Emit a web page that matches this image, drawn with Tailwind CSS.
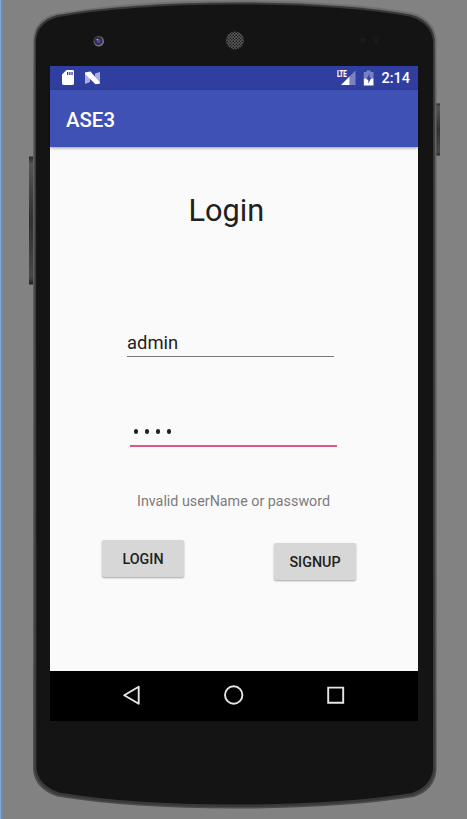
<!DOCTYPE html>
<html lang="en">
<head>
<meta charset="utf-8">
<title>ASE3</title>
<script src="https://cdn.jsdelivr.net/npm/@tailwindcss/browser@4"></script>
</head>
<body class="h-[819px] w-[467px] overflow-hidden bg-[#828282] font-['Roboto',sans-serif]">
<div class="relative h-[819px] w-[467px] border-l-3 border-[#7289a4] pl-[47px] pt-[66px]">
  <!-- device frame -->
  <svg class="absolute -left-[3px] top-0" width="467" height="819" viewBox="0 0 467 819" fill="none">
    <defs>
      <linearGradient id="key" x1="0" y1="0" x2="0" y2="1"><stop stop-color="#292929"/><stop offset=".06" stop-color="#555"/><stop offset=".5" stop-color="#303030"/><stop offset=".94" stop-color="#484848"/><stop offset="1" stop-color="#222"/></linearGradient>
      <linearGradient id="edge" x1="0" y1="0" x2="0" y2="1"><stop stop-color="#707371"/><stop offset=".12" stop-color="#626262"/><stop offset=".8" stop-color="#555"/><stop offset="1" stop-color="#4b4b4b"/></linearGradient>
      <pattern id="mesh" width="3" height="3" patternUnits="userSpaceOnUse"><rect width="3" height="3" fill="#5a5a5a"/><circle cx=".8" cy=".8" r=".8" fill="#1c1c1c"/><circle cx="2.300" cy="2.300" r=".8" fill="#1c1c1c"/></pattern>
    </defs>
    <path d="M.5 0v819" stroke="#86a9d3"/>
    <rect x="29" y="156.500" width="5" height="128" fill="url(#key)"/>
    <rect x="435" y="103.500" width="5" height="52" fill="url(#key)"/>
    <path d="M33 40Q34 19 56 13.500Q130 .5 235 .5Q340 .5 412 12.500Q435 19 436.500 40V770Q435 790 414 797Q340 808.500 235 808.500Q130 808.500 57 796.500Q35 789 33 770Z" fill="url(#edge)"/>
    <path d="M34.500 40Q35.500 21 57 15Q130 2.500 235 2.500Q340 2.500 411 14.500Q433 21 434.800 40V770Q433 788 413 795.500Q340 807 235 807Q130 807 58 795Q36.500 787 34.500 770Z" fill="#393939"/>
    <path d="M36 41Q37 23 58 17Q130 4.500 235 4.500Q340 4.500 410 16.500Q431 23 433 41V769Q431 786 412 793Q340 804.500 235 804.500Q130 804.500 59 792.500Q38.500 785 36.500 769Z" fill="#141414"/>
    <circle cx="98.800" cy="41.200" r="5.200" fill="#777183"/>
    <circle cx="98.300" cy="40.800" r="4.200" fill="#302b48"/>
    <circle cx="98.500" cy="41" r="2.100" fill="#4e499a"/>
    <circle cx="97.300" cy="39.500" r=".8" fill="#b8b4cc"/>
    <circle cx="235" cy="40.500" r="9" fill="url(#mesh)"/>
    <circle cx="363" cy="40.500" r="3" fill="#1b1a1a"/><circle cx="376" cy="40.500" r="2.500" fill="#1b1a1a"/>
  </svg>

  <main class="relative flex h-[655px] w-[368px] flex-col bg-[#fafafa]">
    <div class="flex h-6 shrink-0 items-center bg-[#303f9f] pl-3 pr-2 text-white">
      <svg class="shrink-0" width="40" height="24" viewBox="0 0 40 24">
        <path fill="#fff" fill-rule="evenodd" d="M4.500 4H10.600Q12 4 12 5.400V17.600Q12 19 10.600 19H1.500Q0 19 0 17.600V8.500ZM5 6V9h1.300V6ZM7.200 6V9h1.300V6ZM9.400 6V9h1.300V6Z"/>
        <path fill="#a9afdc" d="M23 6.500L28 8V16L23 18ZM38 6V17.500L33 15V7.500Z"/>
        <path fill="#fff" d="M23 6.500L28.500 5.600L38 16.800V17.500L33.500 18.300L23 8Z"/>
      </svg>
      <svg class="ml-auto shrink-0" width="42" height="24" viewBox="0 0 42 24">
        <text x="0" y="11.300" fill="#fff" stroke="#fff" stroke-width=".2" font-family="Roboto" font-size="9.500" font-weight="700" textLength="9.800" lengthAdjust="spacingAndGlyphs">LTE</text>
        <path fill="#7983c4" d="M18.500 4.500V19H12.500V10.500Z"/>
        <path fill="#fff" d="M4 19L12.500 10.500V19Z"/>
        <path fill="#7983c4" d="M29.500 4.500h4V6H36.500V12.500H26.800V6h2.700Z"/>
        <path fill="#fff" d="M26.800 12.500h9.700V19.500H26.800Z"/>
        <path fill="#303f9f" d="M32.500 7.500L29.300 13.500H31.300V17.500L34.300 11.800H32.500Z"/>
      </svg>
      <span class="ml-[2px] pt-[2px] text-[14.500px] leading-6 font-medium">2:14</span>
    </div>
    <header class="flex h-[57px] shrink-0 items-center bg-[#3f51b5] pt-[3px] pl-4 shadow-[0_1px_3px_rgba(0,0,0,0.4)]">
      <h1 class="text-[20.400px] font-medium text-white">ASE3</h1>
    </header>

    <form class="flex h-[524px] shrink-0 flex-col text-[#212121]">
      <h2 class="mt-11 ml-[138.500px] h-10 whitespace-nowrap text-[30.700px] leading-10">Login</h2>
      <div class="mt-[98px] ml-[77px] h-[28px] w-[207px] border-b border-[#777] text-[18.400px] leading-7">admin</div>
      <div class="mt-[62px] ml-[80px] flex h-[28px] w-[207px] items-start gap-[6.500px] border-b-2 border-[#e0568a] pt-[10px] pl-[3.500px]" role="textbox" aria-label="Password">
        <i class="size-[4.500px] rounded-full bg-[#212121]"></i><i class="size-[4.500px] rounded-full bg-[#212121]"></i><i class="size-[4.500px] rounded-full bg-[#212121]"></i><i class="size-[4.500px] rounded-full bg-[#212121]"></i>
      </div>
      <p class="mt-[44px] ml-[87px] h-5 whitespace-nowrap text-[14.300px] leading-5 text-[#7c7c7c]">Invalid userName or password</p>
      <div class="mt-[29px] ml-[52px] flex w-[254px] items-start justify-between">
        <button type="button" class="h-[37px] w-[82px] rounded-[2px] bg-[#d7d7d7] pt-[2px] text-[14.300px] font-medium shadow-[0_1px_2px_rgba(0,0,0,0.35)]">LOGIN</button>
        <button type="button" class="mt-[3px] h-[37px] w-[82px] rounded-[2px] bg-[#d7d7d7] pt-[2px] text-[14.300px] font-medium shadow-[0_1px_2px_rgba(0,0,0,0.35)]">SIGNUP</button>
      </div>
    </form>

    <nav class="flex h-[50px] shrink-0 items-center justify-center bg-black">
      <svg width="368" height="50" viewBox="0 0 368 50" fill="none" stroke="#e6e6e6" stroke-width="1.900" stroke-linejoin="round">
        <path d="M74.200 24.200L88.700 15.800V32.800Z"/>
        <circle cx="183.700" cy="24" r="8.700"/>
        <path stroke-linejoin="miter" d="M278.200 16.600H293.200V31.800H278.200Z"/>
      </svg>
    </nav>
  </main>
</div>
</body>
</html>
